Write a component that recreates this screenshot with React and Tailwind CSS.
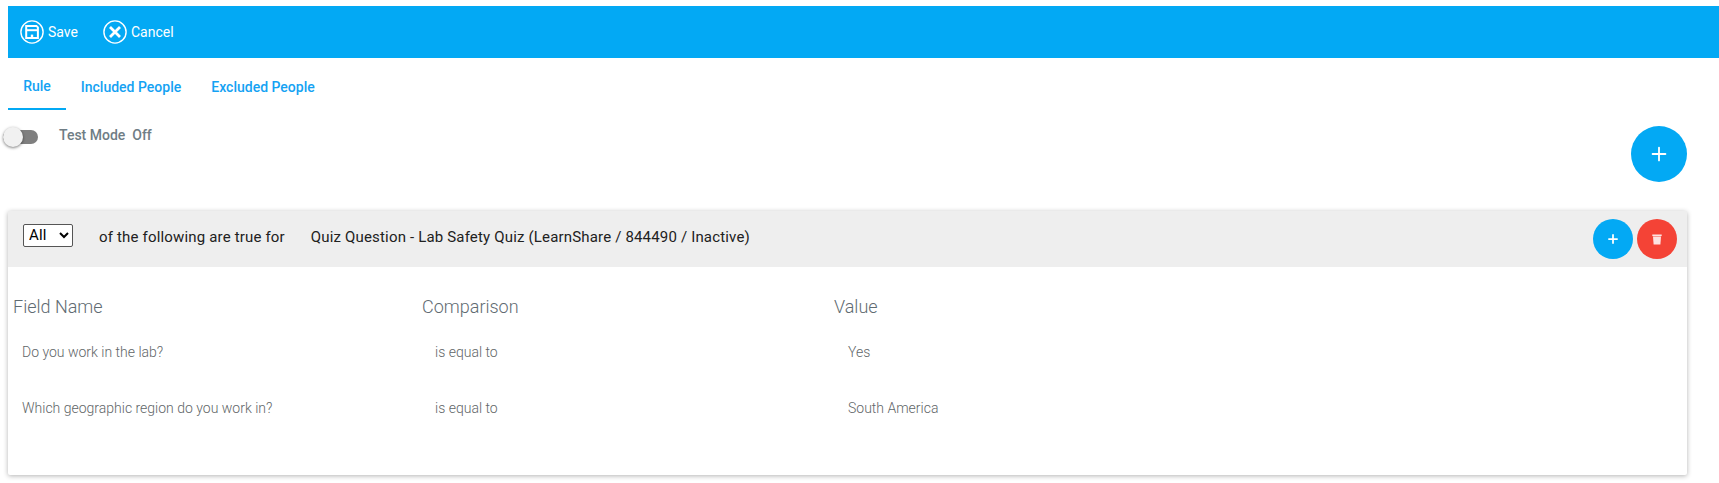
import React from 'react';
import { Plus } from 'lucide-react';

const rows = [
  { field: 'Do you work in the lab?', comparison: 'is equal to', value: 'Yes' },
  { field: 'Which geographic region do you work in?', comparison: 'is equal to', value: 'South America' },
];

const SaveIcon = () => (
  <svg width="24" height="24" viewBox="0 0 24 24" fill="none" className="shrink-0">
    <circle cx="12" cy="12" r="11.1" stroke="white" strokeWidth="1.4" />
    <path d="M6.2 5.9h10.2l1.5 1.5v10.7H6.2z" stroke="white" strokeWidth="2" />
    <path d="M6.5 10.2h11" stroke="white" strokeWidth="2" />
    <rect x="10.8" y="14.6" width="2.4" height="2.4" fill="white" />
  </svg>
);

const CancelIcon = () => (
  <svg width="24" height="24" viewBox="0 0 24 24" fill="none" className="shrink-0">
    <circle cx="12" cy="12" r="11.1" stroke="white" strokeWidth="1.4" />
    <path d="M7 7l10 10M17 7L7 17" stroke="white" strokeWidth="2.8" />
  </svg>
);

const TrashIcon = () => (
  <svg width="10" height="11" viewBox="0 0 10 11" fill="#fde3e1">
    <rect x="0.3" y="0.5" width="9.4" height="1.6" />
    <path d="M1 2.6h8l-.6 8H1.6z" />
  </svg>
);

const App = () => {
  return (
    <div className="h-[483px] w-[1719px] overflow-hidden bg-white pt-[6px] font-['Roboto',sans-serif]">
      {/* Toolbar */}
      <div className="ml-2 flex h-[52px] items-center bg-[#03a9f4] pl-[12px] text-[14px] text-white">
        <div className="flex items-center gap-1">
          <SaveIcon />
          <span>Save</span>
        </div>
        <div className="ml-[25px] flex items-center gap-1">
          <CancelIcon />
          <span>Cancel</span>
        </div>
      </div>

      {/* Tabs */}
      <div className="ml-2 flex h-[52px] text-[14px] font-medium text-[#14a2f3]">
        <div className="flex w-[58px] items-center justify-center border-b-2 border-[#03a9f4] pt-[7px]">Rule</div>
        <div className="ml-[7px] flex w-[116px] items-center justify-center pt-[6px]">Included People</div>
        <div className="ml-[22px] flex w-[104px] items-center justify-center pt-[6px]">Excluded People</div>
      </div>

      {/* Test mode row */}
      <div className="flex h-[101px] justify-between pr-[32px]">
        <div className="flex h-[50px] items-center pl-[3px]">
          <div className="relative mt-1 h-[14px] w-[35px] rounded-full bg-[#7f7f7f]">
            <span className="absolute left-0 top-[-3px] h-[20px] w-[20px] rounded-full bg-[#f1f1f1] shadow-[0_1px_3px_rgba(0,0,0,0.5)]" />
          </div>
          <span className="ml-[21px] text-[14px] font-medium text-[#6f7d85]">Test Mode&nbsp; Off</span>
        </div>
        <button type="button" className="mt-[16px] flex h-[56px] w-[56px] items-center justify-center rounded-full bg-[#03a9f4] text-white">
          <Plus size={22} strokeWidth={2} />
        </button>
      </div>

      {/* Rule card */}
      <div className="ml-2 h-[264px] w-[1679px] rounded-[2px] bg-white shadow-[0_1px_5px_rgba(0,0,0,0.3)]">
        <div className="flex h-[56px] items-center justify-between bg-[#eeeeee] pl-[15px] pr-[10px] text-[15px] tracking-[0.17px] text-[#212121]">
          <div className="flex items-center">
            <select defaultValue="All" className="mb-[8px] h-[23px] w-[50px] rounded-[2px] border border-[#555] bg-white pl-[1px] text-[15px] text-black">
              <option>All</option>
              <option>Any</option>
            </select>
            <span className="mb-[4px] ml-[26px]">of the following are true for</span>
            <span className="mb-[4px] ml-[26px]">Quiz Question - Lab Safety Quiz (LearnShare / 844490 / Inactive)</span>
          </div>
          <div className="flex gap-1">
            <button type="button" className="flex h-10 w-10 items-center justify-center rounded-full bg-[#03a9f4] text-white">
              <Plus size={14} strokeWidth={3} />
            </button>
            <button type="button" className="flex h-10 w-10 items-center justify-center rounded-full bg-[#f44336]">
              <TrashIcon />
            </button>
          </div>
        </div>

        <div className="grid grid-cols-[409px_412px_1fr] pl-[5px] pt-[28px] text-[18px] font-light leading-[24px] text-[#5f6b72]">
          <div>Field Name</div>
          <div>Comparison</div>
          <div>Value</div>
        </div>

        <div className="mt-[5px] pl-[5px] text-[14px] font-light text-[#5f6668]">
          {rows.map((row) => (
            <div key={row.field} className="grid h-[56px] grid-cols-[409px_412px_1fr] items-center">
              <div className="pl-[9px]">{row.field}</div>
              <div className="pl-[13px]">{row.comparison}</div>
              <div className="pl-[14px]">{row.value}</div>
            </div>
          ))}
        </div>
      </div>
    </div>
  );
};

export default App;
